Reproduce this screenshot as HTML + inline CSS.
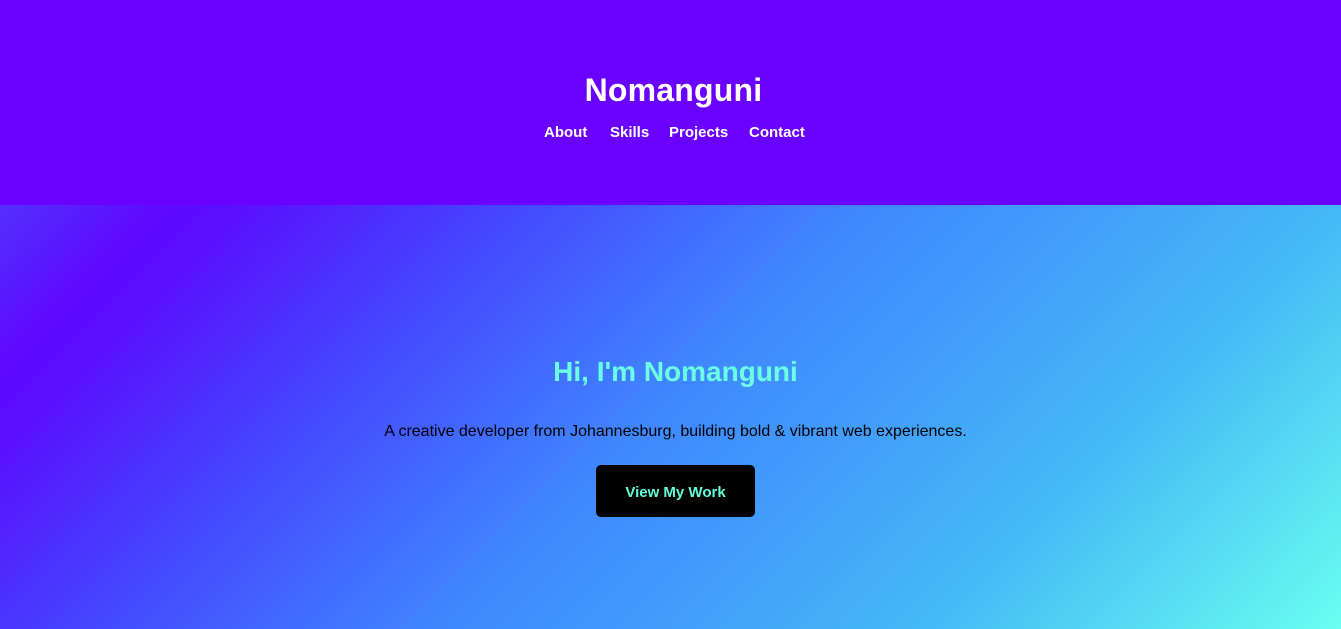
<!DOCTYPE html>
<html><head><meta charset="utf-8"><style>
*{margin:0;padding:0;box-sizing:border-box}
body{width:1341px;height:629px;overflow:hidden;font-family:"Liberation Sans",Arial,sans-serif;position:relative}
header{position:absolute;left:0;top:0;width:1341px;height:205px;background:#6a00ff;color:#fff}
h1{position:absolute;left:0;width:1341px;top:70px;text-align:center;font-size:32px;font-weight:bold;letter-spacing:0.2px;line-height:40px;padding-left:6px}
.nav a{position:absolute;top:124px;font-size:15px;font-weight:bold;color:#fff;text-decoration:none;line-height:18px}
.hero{position:absolute;left:0;top:205px;width:1341px;height:424px;
background:linear-gradient(135deg,#5230ff 0%,#5e0aff 9%,#5a10ff 14%,#4640ff 27%,#3f85ff 48%,#45b8f6 76%,#68fff0 100%)}
h2{position:absolute;left:0;width:1341px;top:150px;text-align:center;font-size:28px;font-weight:bold;color:#6affe4;line-height:34px;padding-left:10px}
p{position:absolute;left:0;width:1341px;top:217px;text-align:center;font-size:16px;color:#000;line-height:20px;padding-left:10px}
.btn{position:absolute;left:596px;top:260px;width:159px;height:52px;background:#000;border-radius:5px;color:#64ffda;font-weight:bold;font-size:15px;text-align:center;line-height:55px}
</style></head><body>
<header>
<h1>Nomanguni</h1>
<div class="nav"><a style="left:544px">About</a><a style="left:610px">Skills</a><a style="left:669px">Projects</a><a style="left:749px">Contact</a></div>
</header>
<section class="hero">
<h2>Hi, I'm Nomanguni</h2>
<p>A creative developer from Johannesburg, building bold &amp; vibrant web experiences.</p>
<div class="btn">View My Work</div>
</section>
</body></html>
